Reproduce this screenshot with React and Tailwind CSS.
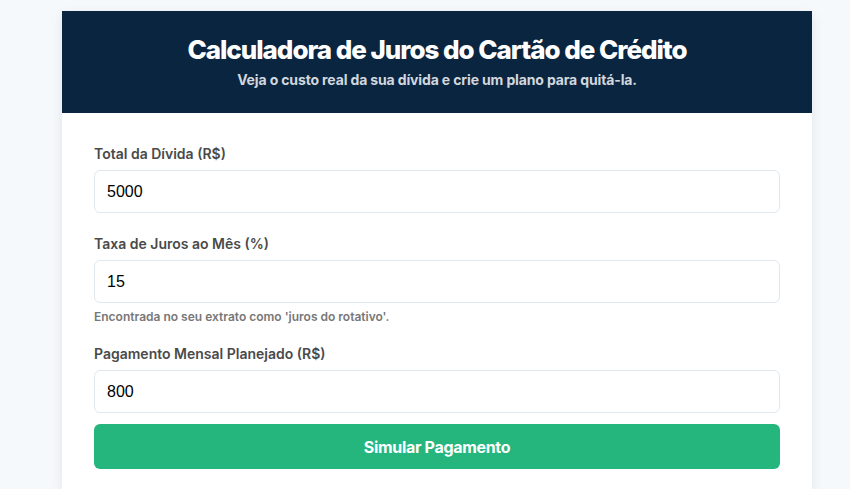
const Field = ({ label, value, hint, className }) => (
  <div className={className}>
    <label className="mb-[6px] block text-[14px] leading-[21px] font-semibold text-[#4a4a4a]">
      {label}
    </label>
    <input
      type="text"
      defaultValue={value}
      className="block h-[43px] w-full rounded-[6px] border border-[#e2e8f0] bg-white px-[12px] text-[16px] text-black outline-none"
      style={{ fontFamily: '"Liberation Sans", Arial, sans-serif' }}
    />
    {hint && (
      <p className="mt-[5px] text-[12px] leading-[18px] font-semibold text-[#777777]">
        {hint}
      </p>
    )}
  </div>
);

export default function App() {
  return (
    <div
      className="min-h-[489px] bg-[#f6f9fc] pt-[11px]"
      style={{ fontFamily: 'Inter, "Noto Sans", sans-serif' }}
    >
      <div className="ml-[62px] w-[750px] bg-white shadow-[0_4px_12px_rgba(0,0,0,0.08)]">
        <div className="flex h-[102px] flex-col items-center justify-center bg-[#0a2540] text-center">
          <h1 className="text-[26px] leading-[32px] font-extrabold tracking-[-0.04em] text-white">
            Calculadora de Juros do Cartão de Crédito
          </h1>
          <p className="mt-[4px] text-[14px] leading-[20px] font-bold tracking-[-0.01em] text-[#d2d7de]">
            Veja o custo real da sua dívida e crie um plano para quitá-la.
          </p>
        </div>
        <div className="px-[32px] pt-[30px] pb-[20px]">
          <Field className="mb-[20px]" label="Total da Dívida (R$)" value="5000" />
          <Field
            className="mb-[17px]"
            label="Taxa de Juros ao Mês (%)"
            value="15"
            hint="Encontrada no seu extrato como 'juros do rotativo'."
          />
          <Field className="mb-[11px]" label="Pagamento Mensal Planejado (R$)" value="800" />
          <button className="h-[45px] w-full rounded-[6px] bg-[#25b67d] text-[16px] font-bold tracking-[-0.02em] text-white">
            Simular Pagamento
          </button>
        </div>
      </div>
    </div>
  );
}
